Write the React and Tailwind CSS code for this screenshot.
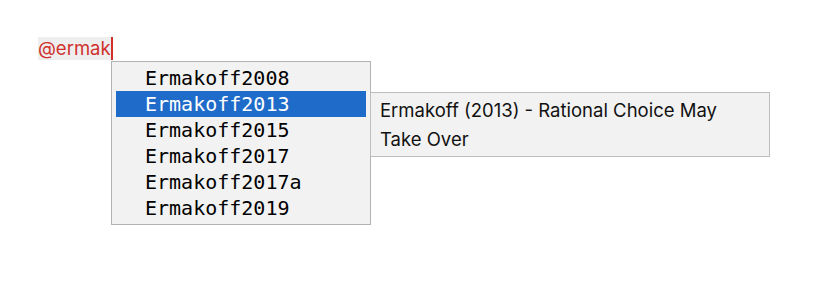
import React from 'react';

const items = ['Ermakoff2008', 'Ermakoff2013', 'Ermakoff2015', 'Ermakoff2017', 'Ermakoff2017a', 'Ermakoff2019'];

function App() {
	const selected = 1;

	return (
		<div className="w-[820px] h-[302px] bg-white pl-[38px] pt-[37px]">
			{/* typed mention */}
			<div className="flex">
				<span className="h-[23px] flex items-center bg-[#eeeeee] text-[#d0312d] text-[18.5px] font-['Inter',sans-serif] border-r-2 border-[#d0312d]">
					@ermak
				</span>
			</div>

			<div className="flex items-start ml-[73px] mt-[1px]">
				{/* completion list */}
				<div className="w-[260px] bg-[#f2f2f2] border border-[#b3b3b3] px-[4px] py-[3px]">
					{items.map((item, i) => (
						<div
							key={i}
							className={
								i === selected
									? 'h-[26px] flex items-center pl-[29px] bg-[#1f6bc9] text-white text-[20px] font-["DejaVu_Sans_Mono",monospace]'
									: 'h-[26px] flex items-center pl-[29px] text-black text-[20px] font-["DejaVu_Sans_Mono",monospace]'
							}
						>
							{item}
						</div>
					))}
				</div>

				{/* detail panel */}
				<div className="w-[400px] -ml-[1px] mt-[31px] bg-[#f2f2f2] border border-[#bdbdbd] pl-[9px] pr-[30px] pt-[3px] pb-[2px] text-[18.5px] leading-[29px] text-[#111111] font-['Inter',sans-serif]">
					Ermakoff (2013) - Rational Choice May Take Over
				</div>
			</div>
		</div>
	);
}

export default App;
